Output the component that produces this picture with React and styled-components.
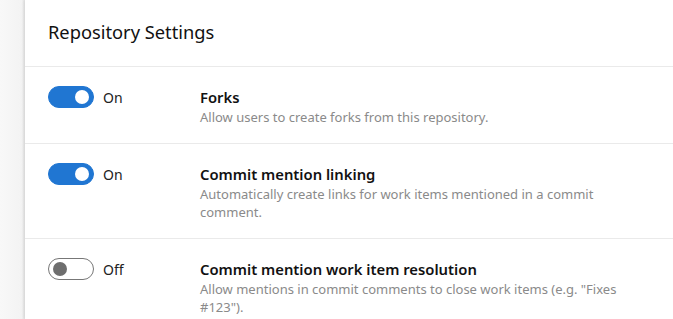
import styled, { createGlobalStyle } from "styled-components";

const GlobalStyle = createGlobalStyle`
  html, body {
    margin: 0;
    padding: 0;
    background: #f8f8f8;
  }
  body {
    font-family: "Noto Sans", "Open Sans", sans-serif;
    color: #000;
  }
`;

const settings = [
  {
    on: true,
    title: "Forks",
    description: "Allow users to create forks from this repository.",
  },
  {
    on: true,
    title: "Commit mention linking",
    description:
      "Automatically create links for work items mentioned in a commit comment.",
  },
  {
    on: false,
    title: "Commit mention work item resolution",
    description:
      'Allow mentions in commit comments to close work items (e.g. "Fixes #123").',
  },
];

const Page = styled.div`
  display: flex;
  height: 319px;
  overflow: hidden;
  background: linear-gradient(to right, #f8f8f8 0, #f3f3f3 22px, #e6e6e6 24px);
`;

const Rail = styled.div`
  width: 25px;
  flex-shrink: 0;
`;

const Panel = styled.div`
  flex: 1;
  background: #fff;
  box-shadow: -1px 0 3px rgba(0, 0, 0, 0.08);
`;

const Header = styled.h2`
  margin: 0;
  padding: 19px 23px 0;
  height: 47px;
  font-size: 18.3px;
  font-weight: 400;
  border-bottom: 1px solid #eaeaea;
  color: #111;
`;

const Row = styled.div`
  display: flex;
  align-items: flex-start;
  padding: 19px 23px 17px;
  border-bottom: ${(p) => (p.$last ? "none" : "1px solid #eaeaea")};
`;

const ToggleArea = styled.div`
  width: 152px;
  height: 22px;
  flex-shrink: 0;
  display: flex;
  align-items: center;
  gap: 9px;
`;

const Track = styled.span`
  box-sizing: border-box;
  width: 46px;
  height: 22px;
  border-radius: 11px;
  display: flex;
  align-items: center;
  justify-content: ${(p) => (p.$on ? "flex-end" : "flex-start")};
  padding: 0 4px;
  background: ${(p) => (p.$on ? "#2076d2" : "#fff")};
  border: 1px solid ${(p) => (p.$on ? "#2076d2" : "#777")};
`;

const Knob = styled.span`
  width: 14px;
  height: 14px;
  border-radius: 50%;
  background: ${(p) => (p.$on ? "#fff" : "#6e6e6e")};
`;

const State = styled.span`
  font-size: 14px;
  color: #222;
`;

const Info = styled.div`
  display: flex;
  flex-direction: column;
  max-width: 430px;
`;

const Title = styled.div`
  font-size: 14.8px;
  font-weight: 600;
  line-height: 22px;
  color: #111;
`;

const Description = styled.div`
  font-size: 13px;
  line-height: 18px;
  color: #8a8a8a;
`;

export default function App() {
  return (
    <>
      <GlobalStyle />
      <Page>
        <Rail />
        <Panel>
          <Header>Repository Settings</Header>
          {settings.map((s, i) => (
            <Row key={s.title} $last={i === settings.length - 1}>
              <ToggleArea>
                <Track $on={s.on}>
                  <Knob $on={s.on} />
                </Track>
                <State>{s.on ? "On" : "Off"}</State>
              </ToggleArea>
              <Info>
                <Title>{s.title}</Title>
                <Description>{s.description}</Description>
              </Info>
            </Row>
          ))}
        </Panel>
      </Page>
    </>
  );
}
